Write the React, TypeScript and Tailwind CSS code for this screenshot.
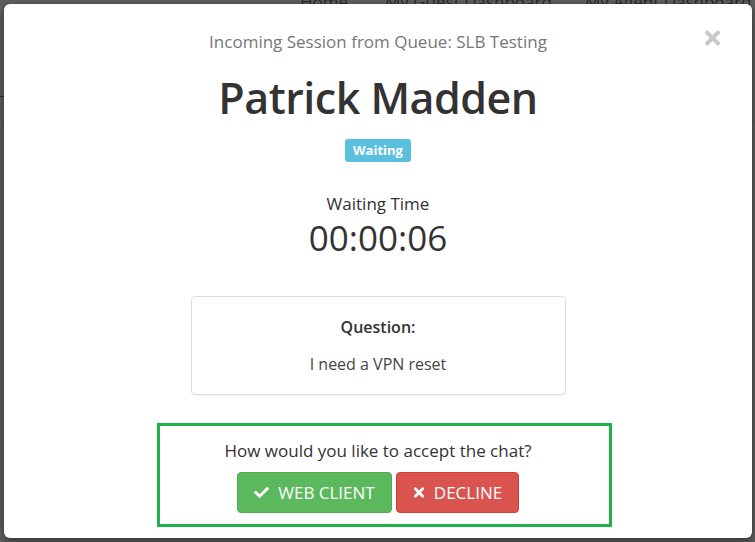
import React from "react";

const font = { fontFamily: '"Open Sans", "Noto Sans", sans-serif' };

const CheckIcon: React.FC = () => (
  <svg viewBox="0 0 512 512" className="w-[15px] h-[15px]" fill="currentColor">
    <path d="M173.9 439.4L7.5 273c-10-10-10-26.2 0-36.2l36.2-36.2c10-10 26.2-10 36.2 0L192 312.7 432.1 72.6c10-10 26.2-10 36.2 0l36.2 36.2c10 10 10 26.2 0 36.2L210.1 439.4c-10 10-26.2 10-36.2 0z" />
  </svg>
);

const TimesIcon: React.FC<{ className?: string }> = ({ className }) => (
  <svg viewBox="0 0 352 512" className={className} fill="currentColor">
    <path d="M242.7 256l100.1-100.1c12.3-12.3 12.3-32.2 0-44.5l-22.2-22.2c-12.3-12.3-32.2-12.3-44.5 0L176 189.3 75.9 89.2c-12.3-12.3-32.2-12.3-44.5 0L9.2 111.4c-12.3 12.3-12.3 32.2 0 44.5L109.3 256 9.2 356.1c-12.3 12.3-12.3 32.2 0 44.5l22.2 22.2c12.3 12.3 32.2 12.3 44.5 0L176 322.7l100.1 100.1c12.3 12.3 32.2 12.3 44.5 0l22.2-22.2c12.3-12.3 12.3-32.2 0-44.5L242.7 256z" />
  </svg>
);

const App: React.FC = () => {
  return (
    <div className="relative w-full h-[542px] overflow-hidden bg-[#5f5f5f]" style={font}>
      {/* page behind the backdrop */}
      <div className="flex pl-[300px] -mt-[11px] text-[17px] text-[#2a2a2a] whitespace-nowrap">
        <span className="w-[85px]">Home</span>
        <span className="w-[200px]">My Guest Dashboard</span>
        <span>My Agent Dashboard</span>
      </div>
      <div className="mt-[81px] border-t border-[#333] w-[10px]" />
      <div className="mt-[24px] border-t border-[#555] w-full" />

      {/* modal */}
      <div className="absolute left-[4px] top-[4px] w-[748px] h-[534px] bg-white rounded-[6px] shadow-[0_3px_9px_rgba(0,0,0,0.5)] flex flex-col items-center text-[#333]">
        <div className="relative w-full flex justify-center pt-[26px]">
          <div className="text-[17px] text-[#777] leading-[24px]">
            Incoming Session from Queue: SLB Testing
          </div>
          <TimesIcon className="absolute right-[31px] top-[23px] w-[17px] h-[22px] text-[#c8c8c8]" />
        </div>

        <h1 className="mt-[14px] text-[43px] font-semibold leading-[60px] tracking-[-0.5px]">
          Patrick Madden
        </h1>

        <span className="mt-[11px] px-[8px] h-[23px] flex items-center rounded-[3px] bg-[#5bc0de] text-white text-[13px] font-bold">
          Waiting
        </span>

        <div className="mt-[30px] text-[17px] leading-[24px]">Waiting Time</div>
        <div className="mt-[1px] text-[35px] leading-[42px]">00:00:06</div>

        <div className="mt-[37px] w-[375px] h-[99px] border border-[#ddd] rounded-[4px] shadow-[0_1px_1px_rgba(0,0,0,0.05)] flex flex-col items-center pt-[18px]">
          <div className="text-[16px] font-semibold leading-[24px]">Question:</div>
          <div className="mt-[13px] text-[16px] text-[#444] leading-[24px]">I need a VPN reset</div>
        </div>

        <div className="mt-[28px] ml-[12px] w-[455px] h-[104px] border-[3px] border-[#21b14b] flex flex-col items-center pt-[13px] pr-[12px]">
          <div className="text-[17px] leading-[24px]">How would you like to accept the chat?</div>
          <div className="mt-[9px] flex gap-[4px]">
            <button className="h-[41px] w-[155px] flex items-center justify-center gap-[9px] rounded-[4px] bg-[#5cb85c] border border-[#4cae4c] text-white text-[17px]">
              <CheckIcon />
              WEB CLIENT
            </button>
            <button className="h-[41px] w-[123px] flex items-center justify-center gap-[9px] rounded-[4px] bg-[#d9534f] border border-[#d43f3a] text-white text-[17px]">
              <TimesIcon className="w-[12px] h-[15px]" />
              DECLINE
            </button>
          </div>
        </div>
      </div>
    </div>
  );
};

export default App;
